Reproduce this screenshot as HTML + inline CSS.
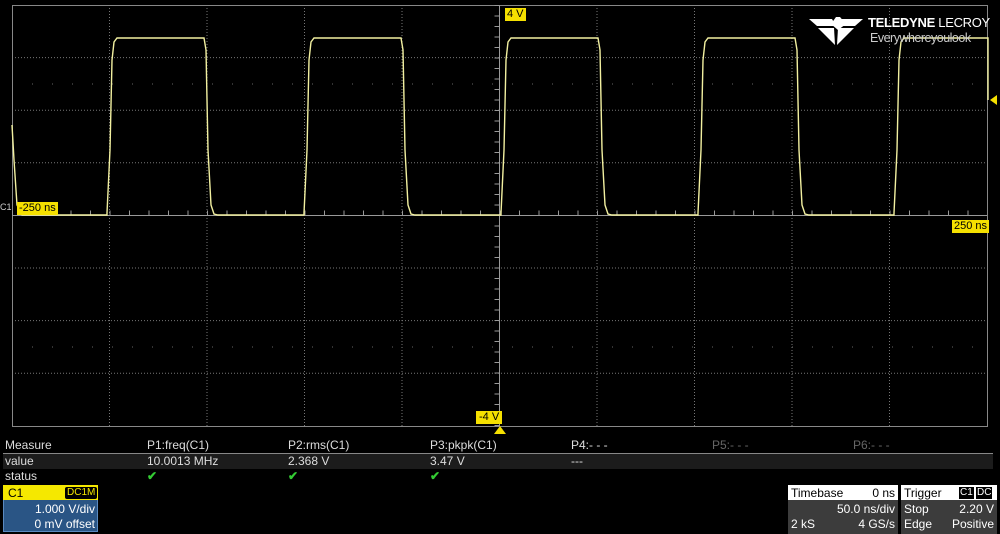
<!DOCTYPE html>
<html><head><meta charset="utf-8"><style>
body{margin:0;width:1000px;height:534px;background:#000;overflow:hidden;font-family:"Liberation Sans",sans-serif;position:relative}
.t{position:absolute;color:#ddd;font-size:12px;white-space:nowrap}
.g{color:#888}
</style></head><body>
<svg width="1000" height="534" style="position:absolute;left:0;top:0">
<g stroke="#777" stroke-width="1" stroke-dasharray="1,2" fill="none">
<line x1="109.5" y1="5" x2="109.5" y2="426"/><line x1="207" y1="5" x2="207" y2="426"/><line x1="304.5" y1="5" x2="304.5" y2="426"/><line x1="402" y1="5" x2="402" y2="426"/><line x1="597" y1="5" x2="597" y2="426"/><line x1="694.5" y1="5" x2="694.5" y2="426"/><line x1="792" y1="5" x2="792" y2="426"/><line x1="889.5" y1="5" x2="889.5" y2="426"/>
<line x1="12" y1="57.6" x2="987" y2="57.6"/><line x1="12" y1="110.2" x2="987" y2="110.2"/><line x1="12" y1="162.8" x2="987" y2="162.8"/><line x1="12" y1="268" x2="987" y2="268"/><line x1="12" y1="320.6" x2="987" y2="320.6"/><line x1="12" y1="373.2" x2="987" y2="373.2"/>
</g>
<g stroke="#666" stroke-width="1" stroke-dasharray="1,19" fill="none">
<line x1="32" y1="84" x2="987" y2="84"/><line x1="32" y1="347" x2="987" y2="347"/>
</g>
<rect x="12.5" y="5.5" width="975" height="421" fill="none" stroke="#888"/>
<line x1="12" y1="215.5" x2="987" y2="215.5" stroke="#999"/>
<line x1="499.5" y1="5" x2="499.5" y2="426" stroke="#999"/>
<g stroke="#999"><line x1="12" y1="213" x2="987" y2="213" stroke-width="5" stroke-dasharray="1,18.5"/><line x1="497" y1="5" x2="497" y2="426" stroke-width="5" stroke-dasharray="1,9.5"/></g>
<path fill="none" stroke="#f2f0a0" stroke-width="1.4" d="M12,125 L14,160 L17,205 L22,215 L107,215 L107,213 L110,150 L112,60 L114,42 L117,38 L204,38 L206,50 L208,150 L211,205 L214,214 L218,215 L304,215 L304,213 L307,150 L309,60 L311,42 L314,38 L401,38 L403,50 L405,150 L408,205 L411,214 L415,215 L501,215 L501,213 L504,150 L506,60 L508,42 L511,38 L598,38 L600,50 L602,150 L605,205 L608,214 L612,215 L698,215 L698,213 L701,150 L703,60 L705,42 L708,38 L795,38 L797,50 L799,150 L802,205 L805,214 L809,215 L894,215 L894,213 L897,150 L899,60 L901,42 L904,38 L988,38 L988,100"/>
<polygon points="494,434 500,426 506,434" fill="#f5e000"/>
<polygon points="990,100 997,95 997,105" fill="#f5e000"/>
<g fill="#fff">
<polygon points="809,19 832,19 836,26 817,26"/><polygon points="836,17 840,17 846,24 838,30 831,24"/><polygon points="863,19 840,19 836,26 855,26"/>
<polygon points="818,28 834,28 835,45"/><polygon points="854,28 838,28 837,45"/>
</g>
</svg>
<div class="t" style="left:868px;top:15px;color:#fff;font-size:13px;font-weight:bold;letter-spacing:-0.3px">TELEDYNE <span style="font-weight:normal">LECROY</span></div>
<div class="t" style="left:870px;top:31px;color:#ccc;font-size:12.5px;letter-spacing:-0.5px">Everywhereyoulook</div>
<div class="t" style="left:505px;top:8px;background:#f5e000;color:#000;font-size:11px;padding:0 2px;line-height:13px">4 V</div>
<div class="t" style="left:476px;top:411px;background:#f5e000;color:#000;font-size:11px;padding:0 3px;line-height:13px">-4 V</div>
<div class="t" style="left:0;top:202px;color:#ccc;font-size:9px">C1</div>
<div class="t" style="left:17px;top:202px;background:#f5e000;color:#000;font-size:11px;padding:0 2px;line-height:13px">-250 ns</div>
<div class="t" style="left:952px;top:220px;background:#f5e000;color:#000;font-size:11px;padding:0 2px;line-height:13px">250 ns</div>
<div style="position:absolute;left:3px;top:453px;width:990px;height:1px;background:#888"></div>
<div style="position:absolute;left:3px;top:454px;width:990px;height:15px;background:#1c1c1c"></div>
<div class="t" style="left:5px;top:438px">Measure</div>
<div class="t" style="left:5px;top:454px">value</div>
<div class="t" style="left:5px;top:469px">status</div>
<div class="t" style="left:147px;top:438px">P1:freq(C1)</div>
<div class="t" style="left:288px;top:438px">P2:rms(C1)</div>
<div class="t" style="left:430px;top:438px">P3:pkpk(C1)</div>
<div class="t" style="left:571px;top:438px">P4:- - -</div>
<div class="t g" style="left:712px;top:438px;color:#666">P5:- - -</div>
<div class="t g" style="left:853px;top:438px;color:#666">P6:- - -</div>
<div class="t" style="left:147px;top:454px">10.0013 MHz</div>
<div class="t" style="left:288px;top:454px">2.368 V</div>
<div class="t" style="left:430px;top:454px">3.47 V</div>
<div class="t" style="left:571px;top:454px">---</div>
<div class="t" style="left:147px;top:469px;color:#3c3;font-weight:bold">✔</div>
<div class="t" style="left:288px;top:469px;color:#3c3;font-weight:bold">✔</div>
<div class="t" style="left:430px;top:469px;color:#3c3;font-weight:bold">✔</div>
<div style="position:absolute;left:3px;top:485px;width:95px;height:47px;background:#2a5585;border:1px solid #5a8ac0;box-sizing:border-box"></div>
<div style="position:absolute;left:3px;top:485px;width:95px;height:15px;background:#f5e800"></div>
<div class="t" style="left:8px;top:486px;color:#000;font-size:12px">C1</div>
<div class="t" style="left:65px;top:487px;background:#000;color:#f5e800;font-size:10px;padding:0 2px;line-height:12px;border-radius:2px">DC1M</div>
<div class="t" style="left:30px;top:502px;color:#fff;width:65px;text-align:right">1.000 V/div</div>
<div class="t" style="left:25px;top:517px;color:#fff;width:70px;text-align:right">0 mV offset</div>
<div style="position:absolute;left:788px;top:485px;width:110px;height:49px;background:#3c3c3c"></div>
<div style="position:absolute;left:788px;top:485px;width:110px;height:15px;background:#fff"></div>
<div class="t" style="left:791px;top:486px;color:#000">Timebase</div>
<div class="t" style="left:845px;top:486px;color:#000;width:50px;text-align:right">0 ns</div>
<div class="t" style="left:815px;top:502px;color:#fff;width:80px;text-align:right">50.0 ns/div</div>
<div class="t" style="left:791px;top:517px;color:#fff">2 kS</div>
<div class="t" style="left:835px;top:517px;color:#fff;width:60px;text-align:right">4 GS/s</div>
<div style="position:absolute;left:901px;top:485px;width:96px;height:49px;background:#3c3c3c"></div>
<div style="position:absolute;left:901px;top:485px;width:96px;height:15px;background:#fff"></div>
<div class="t" style="left:904px;top:486px;color:#000">Trigger</div>
<div class="t" style="left:959px;top:487px;background:#000;color:#fff;font-size:10px;padding:0 1px;line-height:12px">C1</div>
<div class="t" style="left:976px;top:487px;background:#000;color:#fff;font-size:10px;padding:0 1px;line-height:12px">DC</div>
<div class="t" style="left:904px;top:502px;color:#fff">Stop</div>
<div class="t" style="left:935px;top:502px;color:#fff;width:59px;text-align:right">2.20 V</div>
<div class="t" style="left:904px;top:517px;color:#fff">Edge</div>
<div class="t" style="left:935px;top:517px;color:#fff;width:59px;text-align:right">Positive</div>
</body></html>
